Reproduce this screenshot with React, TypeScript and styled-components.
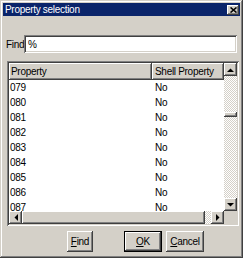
import React from 'react';
import styled, { createGlobalStyle, css } from 'styled-components';

const GlobalStyle = createGlobalStyle`
  html, body {
    margin: 0;
    padding: 0;
    background: #d4d0c8;
  }
`;

const raised = css`
  box-shadow: inset -1px -1px #404040, inset 1px 1px #ffffff, inset -2px -2px #808080,
    inset 2px 2px #d4d0c8;
`;

const sunken = css`
  box-shadow: inset 1px 1px #808080, inset -1px -1px #ffffff, inset 2px 2px #404040,
    inset -2px -2px #d4d0c8;
`;

const Window = styled.div`
  width: 243px;
  height: 258px;
  box-sizing: border-box;
  padding: 3px;
  display: flex;
  flex-direction: column;
  background: #d4d0c8;
  box-shadow: inset -1px -1px #404040, inset 1px 1px #d4d0c8, inset -2px -2px #808080,
    inset 2px 2px #ffffff;
  font-family: 'Liberation Sans', Arial, sans-serif;
  font-size: 10px;
  letter-spacing: -0.3px;
  color: #000;
`;

const TitleBar = styled.div`
  height: 13px;
  display: flex;
  align-items: center;
  justify-content: space-between;
  padding: 0 1px 0 2px;
  background: #0a246a;
  color: #fff;
`;

const CloseButton = styled.div`
  width: 12px;
  height: 10px;
  display: flex;
  align-items: center;
  justify-content: center;
  background: #d4d0c8;
  ${raised};
`;

const Body = styled.div`
  display: flex;
  flex-direction: column;
  padding: 19px 1px 0 3px;
`;

const FindRow = styled.div`
  display: flex;
  align-items: center;
  height: 18px;
  padding-right: 2px;
`;

const Label = styled.span`
  width: 18px;
`;

const Input = styled.div`
  flex: 1;
  height: 18px;
  box-sizing: border-box;
  padding: 0 4px;
  display: flex;
  align-items: center;
  background: #fff;
  ${sunken};
`;

const List = styled.div`
  margin: 8px 0 0 1px;
  height: 165px;
  box-sizing: border-box;
  padding: 2px;
  display: grid;
  grid-template-columns: 1fr 13px;
  grid-template-rows: 1fr 13px;
  background: #fff;
  ${sunken};
`;

const Content = styled.div`
  overflow: hidden;
  background: #fff;
`;

const Header = styled.div`
  display: grid;
  grid-template-columns: 143px 1fr;
  height: 17px;
`;

const HeaderCell = styled.div`
  display: flex;
  align-items: center;
  padding-left: ${(p: { $pad: number }) => p.$pad}px;
  background: #d4d0c8;
  ${raised};
`;

const Row = styled.div`
  display: grid;
  grid-template-columns: 143px 1fr;
  height: 15px;
  align-items: center;
`;

const Cell = styled.span<{ $pad: number }>`
  padding-left: ${(p) => p.$pad}px;
`;

const dither = css`
  background-color: #d4d0c8;
  background-image: repeating-conic-gradient(#ffffff 0 25%, #d4d0c8 0 50%);
  background-size: 2px 2px;
`;

const VScroll = styled.div`
  display: flex;
  flex-direction: column;
`;

const HScroll = styled.div`
  display: flex;
`;

const ArrowButton = styled.div`
  width: 13px;
  height: 13px;
  flex: none;
  display: flex;
  align-items: center;
  justify-content: center;
  background: #d4d0c8;
  ${raised};
`;

const Track = styled.div<{ $vertical?: boolean }>`
  flex: 1;
  display: flex;
  flex-direction: ${(p) => (p.$vertical ? 'column' : 'row')};
  ${dither};
`;

const Thumb = styled.div<{ $start: number; $size: string; $vertical?: boolean }>`
  flex: none;
  background: #d4d0c8;
  ${raised};
  ${(p) =>
    p.$vertical
      ? css`
          margin-top: ${p.$start}px;
          height: ${p.$size};
        `
      : css`
          margin-left: ${p.$start}px;
          width: ${p.$size};
        `}
`;

const Corner = styled.div`
  background: #d4d0c8;
`;

const ButtonRow = styled.div`
  display: flex;
  margin-top: 5px;
  padding-left: 61px;
`;

const Button = styled.div<{ $w: number; $gap: number; $default?: boolean }>`
  width: ${(p) => p.$w}px;
  height: 21px;
  margin-left: ${(p) => p.$gap}px;
  display: flex;
  align-items: center;
  justify-content: center;
  background: #d4d0c8;
  ${(p) =>
    p.$default
      ? css`
          box-shadow: inset 0 0 0 1px #000, inset -2px -2px #404040, inset 2px 2px #ffffff,
            inset -3px -3px #808080;
        `
      : raised};

  u {
    text-decoration: underline;
  }
`;

function Arrow({ dir }: { dir: 'up' | 'down' | 'left' | 'right' }) {
  const pts = {
    up: '0,4 7,4 3.5,0.5',
    down: '0,0 7,0 3.5,3.5',
    left: '4,0 4,7 0.5,3.5',
    right: '0,0 0,7 3.5,3.5',
  }[dir];
  const vertical = dir === 'up' || dir === 'down';
  return (
    <svg width={vertical ? 7 : 4} height={vertical ? 4 : 7} viewBox={vertical ? '0 0 7 4' : '0 0 4 7'}>
      <polygon points={pts} fill="#000" />
    </svg>
  );
}

const rows = ['079', '080', '081', '082', '083', '084', '085', '086', '087'];

export default function App() {
  return (
    <>
      <GlobalStyle />
      <Window>
        <TitleBar>
          <span>Property selection</span>
          <CloseButton>
            <svg width="7" height="6" viewBox="0 0 7 6">
              <path d="M0.5 0.5 L6.5 5.5 M6.5 0.5 L0.5 5.5" stroke="#000" strokeWidth="1.6" />
            </svg>
          </CloseButton>
        </TitleBar>
        <Body>
          <FindRow>
            <Label>Find</Label>
            <Input>%</Input>
          </FindRow>
          <List>
            <Content>
              <Header>
                <HeaderCell $pad={2}>Property</HeaderCell>
                <HeaderCell $pad={3}>Shell Property</HeaderCell>
              </Header>
              {rows.map((r) => (
                <Row key={r}>
                  <Cell $pad={1}>{r}</Cell>
                  <Cell $pad={3}>No</Cell>
                </Row>
              ))}
            </Content>
            <VScroll>
              <ArrowButton>
                <Arrow dir="up" />
              </ArrowButton>
              <Track $vertical>
                <Thumb $vertical $start={36} $size="5px" />
              </Track>
              <ArrowButton>
                <Arrow dir="down" />
              </ArrowButton>
            </VScroll>
            <HScroll>
              <ArrowButton>
                <Arrow dir="left" />
              </ArrowButton>
              <Track>
                <Thumb $start={0} $size="calc(100% - 6px)" />
              </Track>
              <ArrowButton>
                <Arrow dir="right" />
              </ArrowButton>
            </HScroll>
            <Corner />
          </List>
          <ButtonRow>
            <Button $w={26} $gap={0}>
              <u>F</u>ind
            </Button>
            <Button $w={38} $gap={31} $default>
              <u>O</u>K
            </Button>
            <Button $w={38} $gap={4}>
              <u>C</u>ancel
            </Button>
          </ButtonRow>
        </Body>
      </Window>
    </>
  );
}
